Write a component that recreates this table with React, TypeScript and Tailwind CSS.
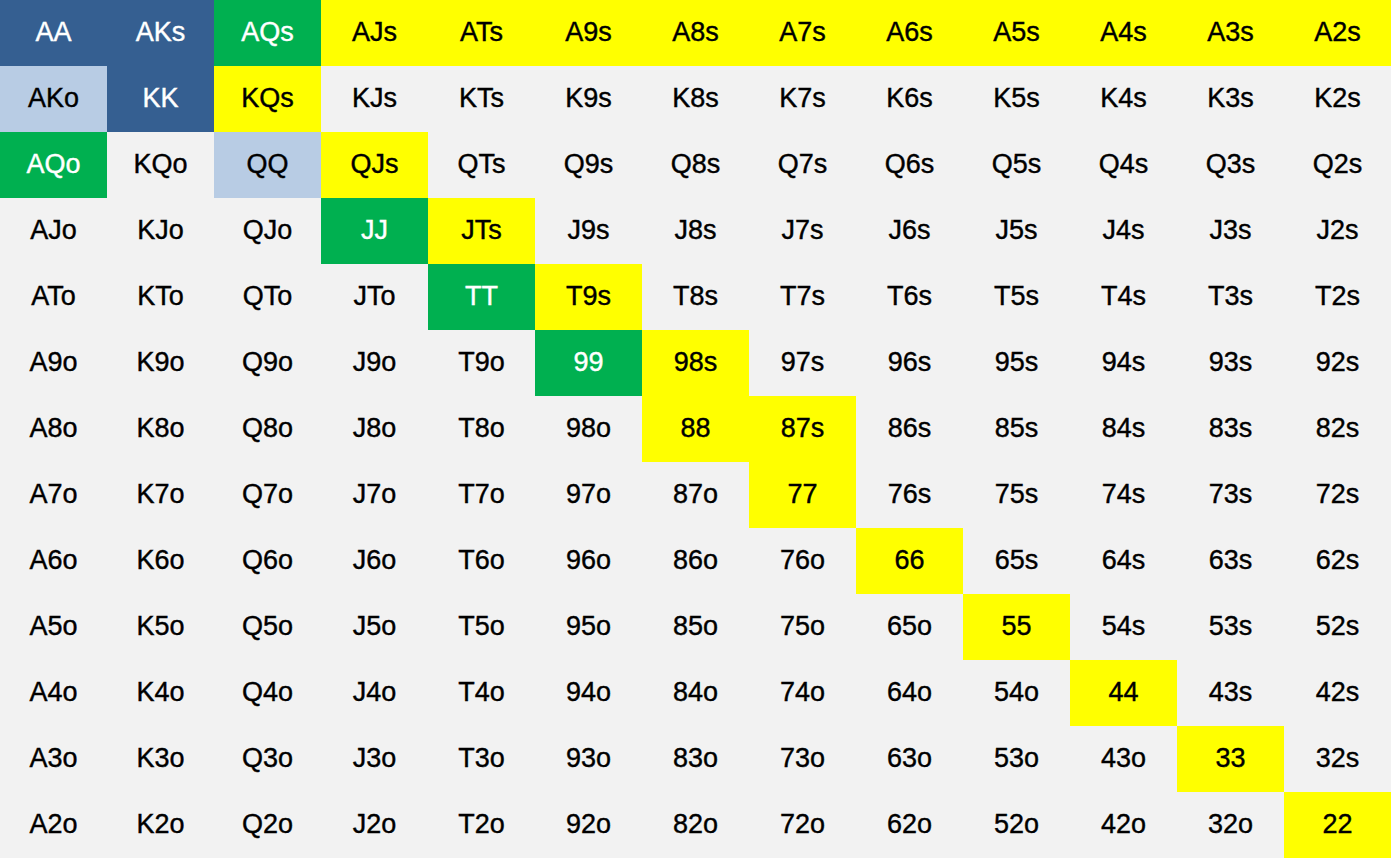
const RANKS = ['A', 'K', 'Q', 'J', 'T', '9', '8', '7', '6', '5', '4', '3', '2'];

const DARK = new Set(['AA', 'AKs', 'KK']);
const LIGHT = new Set(['AKo', 'QQ']);
const GREEN = new Set(['AQs', 'AQo', 'JJ', 'TT', '99']);
const YELLOW = new Set([
  'AJs', 'ATs', 'A9s', 'A8s', 'A7s', 'A6s', 'A5s', 'A4s', 'A3s', 'A2s',
  'KQs', 'QJs', 'JTs', 'T9s', '98s', '87s',
  '88', '77', '66', '55', '44', '33', '22',
]);

function handName(i: number, j: number) {
  if (i === j) return RANKS[i] + RANKS[j];
  if (j > i) return RANKS[i] + RANKS[j] + 's';
  return RANKS[j] + RANKS[i] + 'o';
}

function cellClass(hand: string) {
  if (DARK.has(hand)) return 'bg-[#355f91] text-white';
  if (LIGHT.has(hand)) return 'bg-[#b8cce4] text-black';
  if (GREEN.has(hand)) return 'bg-[#00b050] text-white';
  if (YELLOW.has(hand)) return 'bg-[#ffff00] text-black';
  return 'text-black';
}

export default function App() {
  return (
    <main className="w-full min-h-screen bg-[#f2f2f2]">
      {/* Starting hand chart */}
      <div className="grid grid-cols-13 w-[1391px]">
        {RANKS.map((_, i) =>
          RANKS.map((__, j) => {
            const hand = handName(i, j);
            return (
              <div
                key={hand}
                className={`h-[66px] flex items-center justify-center pb-[2px] text-[27px] [-webkit-text-stroke:0.4px_currentColor] font-['Liberation_Sans',Arial,sans-serif] ${cellClass(hand)}`}
              >
                {hand}
              </div>
            );
          })
        )}
      </div>
    </main>
  );
}
